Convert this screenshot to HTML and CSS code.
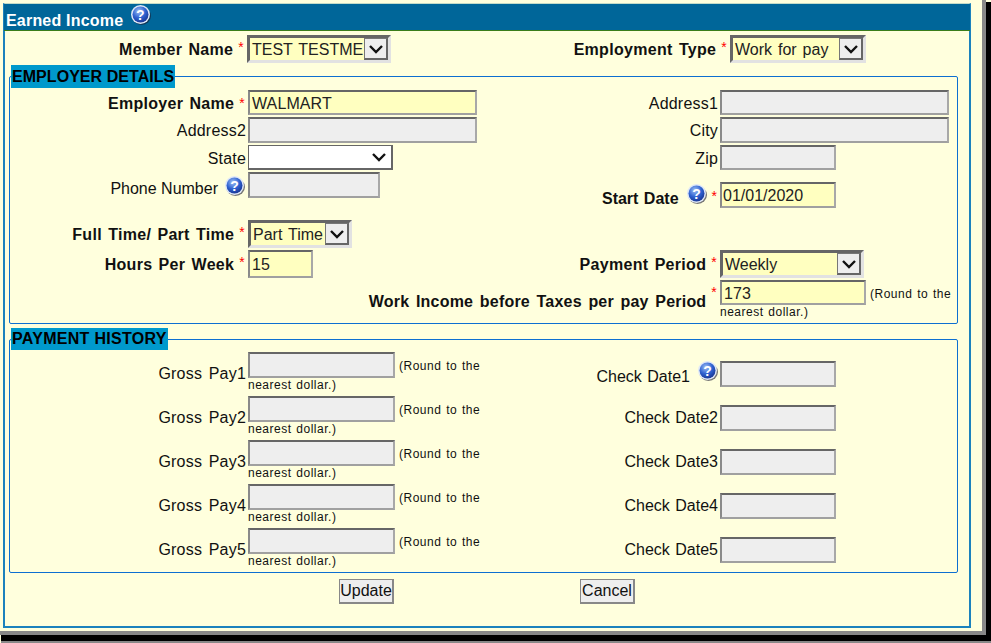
FILE: index.html
```html
<!DOCTYPE html>
<html lang="en">
<head>
    <link rel="stylesheet" href="styles.css">
    <meta charset="UTF-8">
    <title>Earned Income</title>
</head>
<body>
<svg class="defs" width="0" height="0">
  <defs>
    <radialGradient id="ball" cx="40%" cy="30%" r="75%">
      <stop offset="0" stop-color="#9fc0f5"/>
      <stop offset="0.55" stop-color="#2f62d0"/>
      <stop offset="1" stop-color="#17338f"/>
    </radialGradient>
    <symbol id="help" viewBox="0 0 20 20">
      <ellipse cx="10.5" cy="11" rx="9.5" ry="9" fill="#1c1c30" opacity="0.6"/>
      <circle cx="9.5" cy="9.5" r="9.5" fill="#dfe8f8"/>
      <circle cx="9.5" cy="9.5" r="8" fill="url(#ball)"/>
      <text x="9.5" y="14.5" text-anchor="middle" class="help-q">?</text>
    </symbol>
    <symbol id="chev" viewBox="0 0 16 10">
      <path d="M2 2 L8 8 L14 2" fill="none" stroke="#111" stroke-width="2.4"/>
    </symbol>
  </defs>
</svg>

<div class="frame">
  <div class="panel">
    <div class="head">Earned Income <svg class="help head-help"><use href="#help"/></svg></div>

    <div class="top-row">
      <div class="lbl strong">Member Name<span class="req">*</span></div>
      <div class="pick w-member"><span class="pick-val">TEST TESTME</span><span class="pick-btn"><svg class="chev"><use href="#chev"/></svg></span></div>
      <div class="lbl strong">Employment Type<span class="req">*</span></div>
      <div class="pick w-emptype"><span class="pick-val">Work for pay</span><span class="pick-btn"><svg class="chev"><use href="#chev"/></svg></span></div>
    </div>

    <fieldset class="box">
      <legend>EMPLOYER DETAILS</legend>
      <div class="grid details">
        <div class="lbl lo strong">Employer Name<span class="req">*</span></div>
        <div><input class="fld need w-long" value="WALMART"></div>
        <div class="lbl lo">Address1</div>
        <div><input class="fld off w-long"></div>

        <div class="lbl lo">Address2</div>
        <div><input class="fld off w-long"></div>
        <div class="lbl">City</div>
        <div><input class="fld off w-long"></div>

        <div class="lbl lo">State</div>
        <div class="state"><svg class="chev"><use href="#chev"/></svg></div>
        <div class="lbl lo">Zip</div>
        <div><input class="fld off w-date"></div>

        <div class="lbl phone-lbl">Phone Number<svg class="help"><use href="#help"/></svg></div>
        <div><input class="fld off w-phone"></div>
        <div class="lbl start-lbl strong">Start Date<svg class="help"><use href="#help"/></svg><span class="req">*</span></div>
        <div class="start-fld"><input class="fld need w-date" value="01/01/2020"></div>

        <div class="spacer"></div>

        <div class="lbl strong">Full Time/ Part Time<span class="req">*</span></div>
        <div class="pick w-full"><span class="pick-val">Part Time</span><span class="pick-btn"><svg class="chev"><use href="#chev"/></svg></span></div>
        <div></div>
        <div></div>

        <div class="lbl strong">Hours Per Week<span class="req">*</span></div>
        <div><input class="fld need w-hours" value="15"></div>
        <div class="lbl strong">Payment Period<span class="req">*</span></div>
        <div class="pick w-period"><span class="pick-val">Weekly</span><span class="pick-btn"><svg class="chev"><use href="#chev"/></svg></span></div>

        <div></div>
        <div></div>
        <div class="lbl strong income-lbl">Work Income before Taxes per pay Period<span class="req">*</span></div>
        <div class="with-note"><input class="fld need w-income" value="173"><span class="note">(Round to the</span><br>nearest dollar.)</div>
      </div>
    </fieldset>

    <fieldset class="box second">
      <legend>PAYMENT HISTORY</legend>
      <div class="grid history">
        <div class="lbl gross">Gross Pay1</div>
        <div class="with-note"><input class="fld off w-gross"><span class="note">(Round to the</span><br>nearest dollar.)</div>
        <div class="lbl check check-first">Check Date1<svg class="help"><use href="#help"/></svg></div>
        <div class="check-fld"><input class="fld off w-date"></div>

        <div class="lbl gross">Gross Pay2</div>
        <div class="with-note"><input class="fld off w-gross"><span class="note">(Round to the</span><br>nearest dollar.)</div>
        <div class="lbl check">Check Date2</div>
        <div class="check-fld"><input class="fld off w-date"></div>

        <div class="lbl gross">Gross Pay3</div>
        <div class="with-note"><input class="fld off w-gross"><span class="note">(Round to the</span><br>nearest dollar.)</div>
        <div class="lbl check">Check Date3</div>
        <div class="check-fld"><input class="fld off w-date"></div>

        <div class="lbl gross">Gross Pay4</div>
        <div class="with-note"><input class="fld off w-gross"><span class="note">(Round to the</span><br>nearest dollar.)</div>
        <div class="lbl check">Check Date4</div>
        <div class="check-fld"><input class="fld off w-date"></div>

        <div class="lbl gross">Gross Pay5</div>
        <div class="with-note"><input class="fld off w-gross"><span class="note">(Round to the</span><br>nearest dollar.)</div>
        <div class="lbl check">Check Date5</div>
        <div class="check-fld"><input class="fld off w-date"></div>
      </div>
    </fieldset>

    <div class="actions">
      <button>Update</button>
      <button>Cancel</button>
    </div>
  </div>
</div>
</body>
</html>
```

FILE: styles.css
```css
html, body {
  margin: 0;
  height: 643px;
  overflow: hidden;
  background: #ffffdd;
}
body {
  font-family: "Liberation Sans", Arial, sans-serif;
  font-size: 16px;
  color: #111;
}
.defs {
  position: absolute;
}

/* window with its hard grey and black shadow */
.frame {
  box-sizing: border-box;
  width: 982px;
  height: 631px;
  padding: 3px 0 0 3px;
  background: #ffffdd;
  box-shadow: 2px 2px 0 2px #888, 5px 6px 0 4px #000, 5px 8px 0 4px #888;
}
.panel {
  box-sizing: border-box;
  width: 968px;
  height: 625px;
  border: 2px solid #1c82bd;
  border-top: 1px solid #c4dcc8;
}
.head {
  height: 26px;
  margin: 0 -1px 0 -1px;
  padding-left: 2px;
  background: #006699;
  border-bottom: 1px solid #3a7d1a;
  color: #fff;
  font-weight: bold;
  line-height: 33px;
  letter-spacing: 0.2px;
}
.help {
  width: 20px;
  height: 20px;
  flex: none;
}
.help-q {
  font-family: "Liberation Sans", Arial, sans-serif;
  font-size: 14px;
  font-weight: bold;
  fill: #fff;
}
.head-help {
  margin-left: 3px;
  vertical-align: 1px;
}

.top-row {
  display: grid;
  grid-template-columns: 240px 253px 226px 1fr;
  column-gap: 2px;
  padding-top: 4px;
  height: 28px;
}

.lbl {
  display: flex;
  justify-content: flex-end;
  align-items: center;
  padding-top: 1px;
  white-space: nowrap;
  letter-spacing: 0.2px;
  word-spacing: 2px;
}
.lo {
  padding-top: 2px;
}
.strong {
  font-weight: bold;
  letter-spacing: 0.3px;
  word-spacing: 1.5px;
}
.req {
  color: #f00;
  font-size: 14px;
  font-weight: normal;
  margin-left: 5px;
  margin-right: 1px;
  align-self: flex-start;
  line-height: 22px;
}

.box {
  margin: 2px 0 0 4px;
  padding: 2px 0 0 0;
  width: 949px;
  box-sizing: border-box;
  border: 1px solid #0d6fd1;
  border-radius: 2px;
}
.box.second {
  margin-top: 4px;
}
.box legend {
  margin-left: 1px;
  padding: 0 1px;
  background: #0099cc;
  color: #000;
  font-weight: bold;
  line-height: 23px;
  letter-spacing: 0.05px;
}
.box.second legend {
  line-height: 22px;
  letter-spacing: 0.3px;
}

.grid {
  display: grid;
  grid-template-columns: 236px 230px 238px 1fr;
  column-gap: 2px;
}
.details {
  grid-template-rows: 25px 26px 25px 36px 8px 28px 28px 43px;
  row-gap: 2px;
}
.history {
  grid-auto-rows: 44px;
}
.spacer {
  grid-column: 1 / -1;
}

.fld {
  box-sizing: border-box;
  height: 100%;
  margin: 0;
  padding: 2px 2px 0 2px;
  font: 16px "Liberation Sans", Arial, sans-serif;
  letter-spacing: 0.1px;
  color: #222;
  border: 2px solid;
  border-color: #666 #a8a8a8 #a0a0a0 #8a8a8a;
  vertical-align: top;
  outline: none;
}
.need {
  background: #ffffc0;
}
.off {
  background: #eeeeee;
}
.w-long { width: 229px; }
.w-date { width: 116px; padding-left: 1px; letter-spacing: 0; }
.w-phone { width: 132px; height: 26px; }
.w-hours { width: 65px; }
.w-income { width: 146px; height: 25px; }
.w-gross { width: 147px; height: 26px; }

/* input with a small hint that wraps under it */
.with-note {
  font-size: 12px;
  line-height: 15px;
  letter-spacing: 0.5px;
  word-spacing: 1px;
  white-space: nowrap;
}
.with-note .fld {
  vertical-align: middle;
}
.note {
  margin-left: 4px;
  vertical-align: -2px;
}

.pick {
  box-sizing: border-box;
  display: flex;
  align-items: center;
  justify-content: space-between;
  height: 28px;
  background: #ffffc0;
  border-style: solid;
  border-width: 3px;
  border-color: #666 #e2e2e2 #e2e2e2 #666;
}
.pick-val {
  padding: 1px 0 0 2px;
  white-space: nowrap;
  word-spacing: 1.5px;
  color: #222;
}
.pick-btn {
  box-sizing: border-box;
  display: flex;
  align-items: center;
  justify-content: center;
  width: 24px;
  height: 22px;
  background: #eeeeee;
  border: 1px solid #555;
  border-right-width: 2px;
  border-bottom-width: 2px;
  border-color: #777 #666 #666 #777;
}
.chev {
  width: 16px;
  height: 10px;
}
.w-member { width: 144px; }
.w-emptype { width: 136px; }
.w-full { width: 104px; }
.w-period { width: 144px; }

.state {
  box-sizing: border-box;
  display: flex;
  align-items: center;
  justify-content: flex-end;
  width: 145px;
  height: 25px;
  padding-right: 4px;
  background: #fff;
  border: 1px solid #666;
  border-right-width: 2px;
  border-bottom-width: 2px;
}

.phone-lbl {
  align-items: flex-start;
  gap: 7px;
  padding-top: 7px;
  line-height: 20px;
  padding-right: 1px;
  height: 24px;
  letter-spacing: 0;
  word-spacing: 0;
}
.phone-lbl .help {
  margin-top: -3px;
}
.start-lbl {
  align-items: flex-end;
  padding-bottom: 0;
  letter-spacing: 0;
  word-spacing: 1px;
}
.start-lbl .help {
  margin: 0 2px 4px 8px;
}
.start-lbl .req {
  align-self: center;
  margin-left: 3px;
  margin-top: 10px;
}
.start-fld {
  padding-top: 10px;
}
.start-fld .fld {
  height: 26px;
}
.income-lbl {
  letter-spacing: 0.2px;
  word-spacing: 2px;
}

.gross {
  align-items: flex-start;
  padding-top: 12px;
  height: 32px;
  line-height: 20px;
}
.check {
  align-items: flex-start;
  padding-top: 12px;
  height: 32px;
  line-height: 20px;
  letter-spacing: 0;
  word-spacing: 1px;
}
.check-first {
  padding-top: 15px;
  height: 29px;
}
.check .help {
  margin: -6px 0 0 8px;
}
.check-fld {
  padding-top: 9px;
}
.check-fld .fld {
  height: 26px;
}

.actions {
  display: flex;
  gap: 186px;
  padding: 6px 0 0 334px;
}
.actions button {
  box-sizing: border-box;
  width: 55px;
  height: 25px;
  padding: 0;
  font: 16px "Liberation Sans", Arial, sans-serif;
  color: #111;
  background: #eeeeee;
  border: 1px solid #888;
  border-right-width: 2px;
  border-bottom-width: 2px;
}
```
